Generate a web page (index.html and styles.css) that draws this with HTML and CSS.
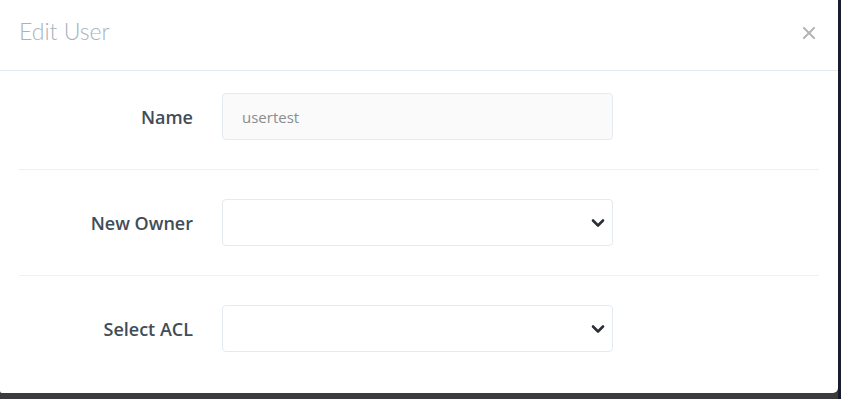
FILE: index.html
```html
<!DOCTYPE html>
<html>
<head>
<meta charset="utf-8">
<link rel="stylesheet" href="styles.css">
</head>
<body>
<div class="backdrop">
  <div class="modal">
    <div class="modal-header">
      <h4 class="title">Edit User</h4>
      <button class="close" aria-label="Close">
        <svg width="12" height="12" viewBox="0 0 12 12"><path d="M1 1L11 11M11 1L1 11" stroke="#b4b4b4" stroke-width="2" stroke-linecap="square"/></svg>
      </button>
    </div>
    <div class="modal-body">
      <div class="row">
        <label class="label">Name</label>
        <div class="field input readonly">usertest</div>
      </div>
      <div class="row">
        <label class="label">New Owner</label>
        <div class="field select">
          <svg class="chev" width="14" height="10" viewBox="0 0 14 10"><path d="M2 2.5L7 7.5L12 2.5" fill="none" stroke="#2b2f36" stroke-width="2.6" stroke-linecap="round" stroke-linejoin="round"/></svg>
        </div>
      </div>
      <div class="row">
        <label class="label">Select ACL</label>
        <div class="field select">
          <svg class="chev" width="14" height="10" viewBox="0 0 14 10"><path d="M2 2.5L7 7.5L12 2.5" fill="none" stroke="#2b2f36" stroke-width="2.6" stroke-linecap="round" stroke-linejoin="round"/></svg>
        </div>
      </div>
    </div>
  </div>
</div>
</body>
</html>
```

FILE: styles.css
```css
html, body {
  margin: 0;
  padding: 0;
  background: #3b3b3d;
}
body {
  width: 841px;
  height: 399px;
  overflow: hidden;
  font-family: "Open Sans", "Noto Sans", sans-serif;
}
.backdrop {
  background: linear-gradient(to right, #3b3b3d 0, #3b3b3d 838px, #1b1b2e 838px);
  height: 399px;
}
.modal {
  width: 838px;
  height: 393px;
  background: #fff;
  border-radius: 0 0 5px 2px;
  box-sizing: border-box;
}
.modal-header {
  height: 70px;
  border-bottom: 1px solid #e1ebf3;
  display: flex;
  align-items: center;
  justify-content: space-between;
  padding: 0 22px 0 19px;
}
.title {
  margin: 0;
  font-family: "Lato", sans-serif;
  font-weight: 300;
  font-size: 23px;
  color: #a5b3bc;
  padding-bottom: 8px;
}
.close {
  border: 0;
  background: none;
  padding: 0;
  width: 14px;
  height: 14px;
  display: flex;
  align-items: center;
  justify-content: center;
  margin-bottom: 4px;
}
.modal-body {
  padding: 22px 19px 0 19px;
}
.row {
  display: flex;
  align-items: center;
  padding-bottom: 29px;
  border-bottom: 1px solid #eef0f2;
  margin-bottom: 29px;
}
.row:last-child {
  border-bottom: 0;
  margin-bottom: 0;
}
.label {
  width: 174px;
  text-align: right;
  font-weight: 600;
  font-size: 18px;
  color: #424c57;
  padding-right: 29px;
  box-sizing: content-box;
}
.field {
  width: 391px;
  height: 47px;
  box-sizing: border-box;
  border: 1px solid #e4eaf2;
  border-radius: 4px;
  background: #fff;
  display: flex;
  align-items: center;
}
.readonly {
  background: #fafafa;
  color: #8a8c8e;
  font-size: 15px;
  padding-left: 19px;
}
.select {
  justify-content: flex-end;
  padding-right: 7px;
}
.chev {
  display: block;
}
```
